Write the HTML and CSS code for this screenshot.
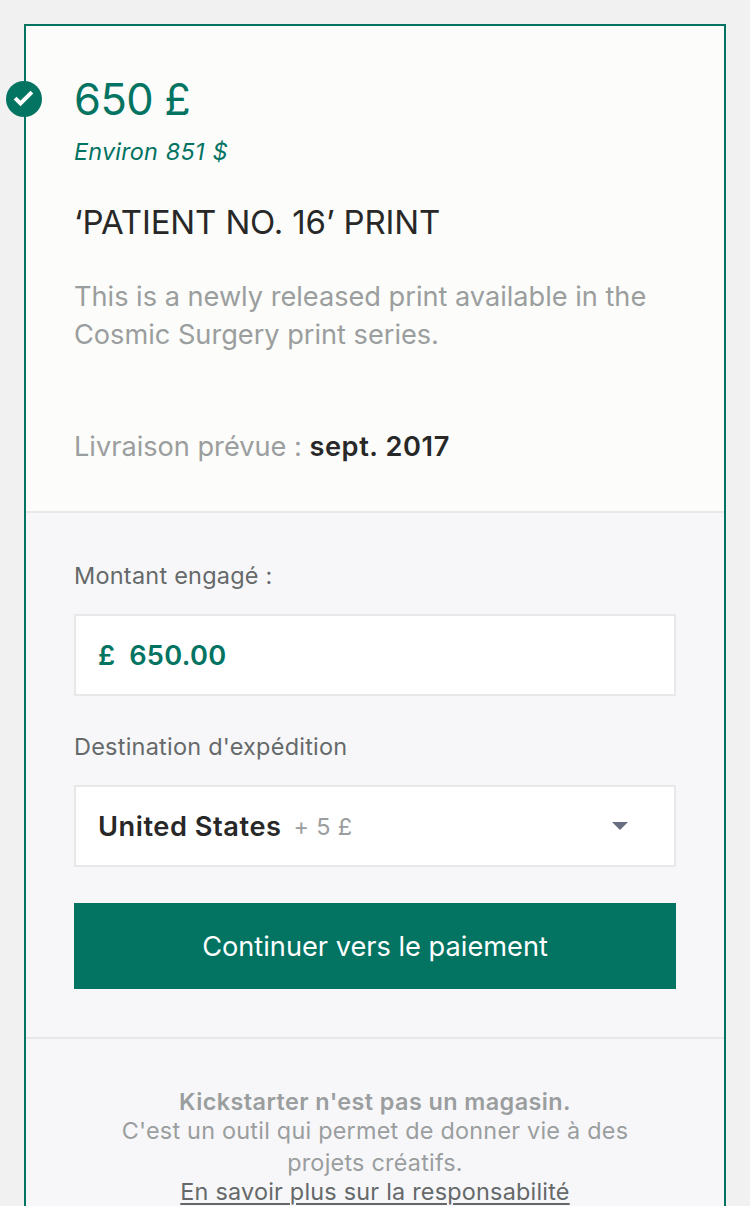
FILE: index.html
```html
<!DOCTYPE html>
<html lang="fr">
<head>
<meta charset="utf-8">
<title>Récompense</title>
<link rel="stylesheet" href="styles.css">
</head>
<body>
<main class="card">
  <svg class="badge" viewBox="0 0 36 36" aria-hidden="true"><circle cx="18" cy="18" r="18"/><path d="M9.1 17.1l5.4 5.4L25.9 11.1"/></svg>
  <section class="reward">
    <h1 class="price">650 £</h1>
    <p class="approx">Environ 851 $</p>
    <h2 class="title">‘PATIENT NO. 16’ PRINT</h2>
    <p class="desc">This is a newly released print available in the<br>Cosmic Surgery print series.</p>
    <p class="delivery">Livraison prévue : <strong>sept. 2017</strong></p>
  </section>
  <form class="pledge">
    <label class="label">Montant engagé :</label>
    <div class="field amount"><span class="currency">£</span><span class="value">650.00</span></div>
    <label class="label destination">Destination d'expédition</label>
    <div class="field"><strong class="country">United States</strong><span class="fee">+ 5 £</span><svg class="arrow" viewBox="0 0 16 8" aria-hidden="true"><path d="M0 0h16L8 8z"/></svg></div>
    <button class="submit" type="button">Continuer vers le paiement</button>
  </form>
  <footer class="notice">
    <strong class="headline">Kickstarter n'est pas un magasin.</strong>
    <p class="explain">C'est un outil qui permet de donner vie à des<br>projets créatifs.</p>
    <a class="more">En savoir plus sur la responsabilité</a>
  </footer>
</main>
</body>
</html>
```
FILE: styles.css
```css
* { box-sizing: border-box; margin: 0; padding: 0; }
html { overflow: hidden; }
body { height: 1206px; overflow: hidden; background: #f1f1f1; font-family: Inter, "Liberation Sans", sans-serif; padding: 24px 24px 0; }
.card { position: relative; height: 1240px; border: 2px solid #037362; background: #f7f7fa; white-space: nowrap; }
.badge { position: absolute; left: -20px; top: 55px; width: 36px; height: 36px; fill: #037362; }
.badge path { fill: none; stroke: #fff; stroke-width: 4; }
.reward { height: 487px; padding: 46px 48px 0; background: #fcfcfa; border-bottom: 2px solid #e8e8e6; }
.price { font-size: 43.4px; line-height: 54px; font-weight: 400; letter-spacing: -0.5px; word-spacing: -0.5px; color: #037362; }
.approx { margin-top: 10px; font-size: 23.4px; line-height: 32px; letter-spacing: 0.2px; word-spacing: 1px; font-style: italic; color: #037362; }
.title { margin-top: 34px; font-size: 33px; line-height: 40px; font-weight: 400; letter-spacing: -0.14px; color: #282828; }
.desc { margin-top: 36px; font-size: 27.2px; line-height: 38px; letter-spacing: -0.02px; color: #9b9e9e; }
.delivery { margin-top: 74px; font-size: 27.2px; line-height: 38px; letter-spacing: -0.02px; color: #9b9e9e; }
.delivery strong { font-weight: 600; letter-spacing: 0.6px; color: #282828; }
.pledge { height: 526px; padding: 46px 48px 0; border-bottom: 2px solid #e8e8e8; }
.label { display: block; font-size: 23.5px; line-height: 34px; letter-spacing: 0.22px; color: #656969; }
.field { display: flex; align-items: center; height: 82px; margin-top: 21px; padding: 0 46px 0 22px; background: #fff; border: 2px solid #e8e8e8; font-size: 27.2px; }
.amount { color: #037362; font-weight: 600; }
.value { margin-left: 14px; letter-spacing: 0.3px; }
.destination { margin-top: 34px; }
.country { color: #282828; font-weight: 600; letter-spacing: 0.55px; }
.fee { margin-left: 12px; font-size: 23.5px; letter-spacing: 0.3px; color: #9b9e9e; }
.arrow { width: 16px; height: 8px; margin-left: auto; fill: #686f80; }
.submit { display: block; width: 100%; height: 86px; margin-top: 36px; background: #037362; border: 0; color: #fff; font: 400 27.2px Inter, sans-serif; }
.notice { display: flex; flex-direction: column; align-items: center; padding-top: 48px; font-size: 23.4px; line-height: 30px; letter-spacing: 0.23px; color: #9b9e9e; text-align: center; }
.headline { font-weight: 600; letter-spacing: 0.42px; }
.explain { margin-top: -2px; line-height: 32px; }
.more { margin-top: -2px; letter-spacing: 0.22px; color: #656969; text-decoration: underline; text-decoration-thickness: 2px; text-underline-offset: 3px; }
```
